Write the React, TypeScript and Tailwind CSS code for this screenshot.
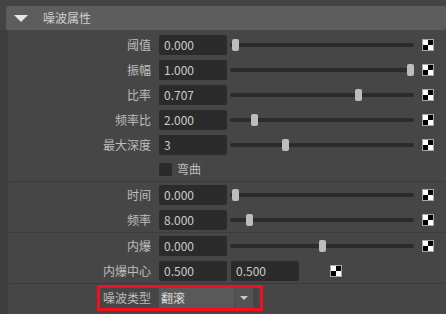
import React from "react";

type SliderRow = { label: string; value: string; pos: number };

const group1: SliderRow[] = [
  { label: "阈值", value: "0.000", pos: 0 },
  { label: "振幅", value: "1.000", pos: 1 },
  { label: "比率", value: "0.707", pos: 0.703 },
  { label: "频率比", value: "2.000", pos: 0.109 },
  { label: "最大深度", value: "3", pos: 0.286 },
];

const group2: SliderRow[] = [
  { label: "时间", value: "0.000", pos: 0 },
  { label: "频率", value: "8.000", pos: 0.08 },
];

function Checker() {
  return (
    <div className="grid h-[12px] w-[12px] shrink-0 grid-cols-2 border border-[#a8a8a8]">
      <div className="bg-white" />
      <div className="bg-black" />
      <div className="bg-black" />
      <div className="bg-white" />
    </div>
  );
}

function Field({ value }: { value: string }) {
  return (
    <div className="flex h-[20px] w-[68px] shrink-0 items-center rounded-[2px] bg-[#2b2b2b] pl-[5px] text-[12px] text-[#cccccc]">
      {value}
    </div>
  );
}

function Label({ text }: { text: string }) {
  return <div className="w-[143px] shrink-0 text-right text-[12px] text-[#bdbdbd]">{text}</div>;
}

function Row({ row }: { row: SliderRow }) {
  return (
    <div className="flex h-[25px] items-center">
      <Label text={row.label} />
      <div className="ml-[8px]">
        <Field value={row.value} />
      </div>
      <div className="relative ml-[3px] h-[20px] w-[184px] shrink-0">
        <div className="absolute left-0 right-0 top-[8px] h-[4px] rounded-full bg-[#2b2b2b]" />
        <div
          className="absolute top-[4px] h-[12px] w-[7px] rounded-[2px] bg-[#bdbdbd]"
          style={{ left: 2 + row.pos * 175 }}
        />
      </div>
      <div className="ml-[8px]">
        <Checker />
      </div>
    </div>
  );
}

function Separator() {
  return <div className="ml-[2px] h-px bg-[#3b3b3b]" />;
}

export default function App() {
  return (
    <div
      className="relative flex h-[314px] w-[446px] flex-col overflow-hidden bg-[#444444] pt-[6px]"
      style={{ fontFamily: '"Noto Sans CJK SC", "Noto Sans", sans-serif' }}
    >
      <div className="ml-[6px] flex h-[24px] shrink-0 items-center rounded-[2px] bg-[#5d5d5d]">
        <svg width="14" height="7" viewBox="0 0 14 7" className="ml-[8px]">
          <polygon points="0,0 14,0 7,7" fill="#e6e6e6" />
        </svg>
        <span className="ml-[15px] text-[12px] text-[#cfcfcf]">噪波属性</span>
      </div>

      <div className="flex flex-1">
        <div className="w-[8px] shrink-0 bg-[#3e3e3e]" />
        <div className="flex-1 bg-[#464646] pt-[2px]">
          {group1.map((r) => (
            <Row key={r.label} row={r} />
          ))}
          <div className="flex h-[24px] items-center">
            <div className="ml-[151px] h-[13px] w-[13px] rounded-[2px] bg-[#2b2b2b]" />
            <span className="ml-[5px] text-[12px] text-[#bdbdbd]">弯曲</span>
          </div>
          <Separator />
          {group2.map((r) => (
            <Row key={r.label} row={r} />
          ))}
          <Separator />
          <Row row={{ label: "内爆", value: "0.000", pos: 0.497 }} />
          <div className="flex h-[25px] items-center">
            <Label text="内爆中心" />
            <div className="ml-[8px]">
              <Field value="0.500" />
            </div>
            <div className="ml-[4px]">
              <Field value="0.500" />
            </div>
            <div className="ml-[31px]">
              <Checker />
            </div>
          </div>
          <Separator />
          <div className="flex h-[27px] items-center">
            <Label text="噪波类型" />
            <div className="ml-[8px] flex h-[22px] w-[94px] items-center rounded-[2px] bg-[#595959]">
              <span className="flex-1 pl-[2px] text-[12px] text-[#dddddd]">翻滚</span>
              <div className="flex h-full w-[19px] items-center justify-center border-l border-[#4a4a4a] bg-[#535353]">
                <svg width="8" height="4" viewBox="0 0 8 4">
                  <polygon points="0,0 8,0 4,4" fill="#c8c8c8" />
                </svg>
              </div>
            </div>
          </div>
        </div>
      </div>

      <div className="absolute left-[97px] top-[285px] h-[26px] w-[166px] border-[3px] border-[#f2101e]" />
    </div>
  );
}
